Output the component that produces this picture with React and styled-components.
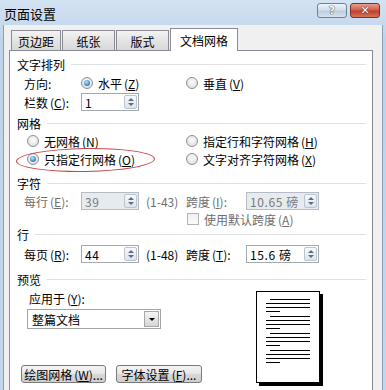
import React from "react";
import styled, { createGlobalStyle } from "styled-components";

const GlobalStyle = createGlobalStyle`
  html, body {
    margin: 0;
    padding: 0;
  }
  body {
    font-family: "Noto Sans CJK SC", "Liberation Sans", sans-serif;
    font-size: 12px;
    color: #000;
    background: #fff;
  }
`;

const Window = styled.div`
  width: 386px;
  height: 390px;
  overflow: hidden;
  display: flex;
  flex-direction: column;
  background: linear-gradient(#d4e3f3, #bed3ea 40px, #c3d6ec);
`;

const TitleBar = styled.div`
  height: 25px;
  flex-shrink: 0;
  display: flex;
  justify-content: space-between;
  padding-left: 4px;
`;

const Title = styled.span`
  font-size: 13px;
  line-height: 25px;
  margin-top: 1px;
`;

const Caption = styled.div`
  display: flex;
  gap: 3px;
  margin: 3px 6px 0 0;
`;

const CaptionButton = styled.div`
  width: 30px;
  height: 15px;
  border-radius: 3px;
  box-sizing: border-box;
  display: flex;
  align-items: center;
  justify-content: center;
  font-family: "DejaVu Sans", sans-serif;
  font-weight: bold;
  font-size: 11px;
  color: #fff;
  border: 1px solid ${(p) => (p.$close ? "#7a3226" : "#6f8299")};
  background: ${(p) =>
    p.$close
      ? "linear-gradient(#e6a08f, #d1604c 45%, #bf3f2c 55%, #d5735a)"
      : "linear-gradient(#eef3f9, #d3dfec 45%, #bdcde0 55%, #d6e2ef)"};
  text-shadow: 0 0 1px #333, 0 0 1px #333;
`;

const Body = styled.div`
  flex: 1;
  display: flex;
  flex-direction: column;
  margin: 0 3px;
  border-left: 1px solid #8d9db2;
  border-right: 1px solid #8d9db2;
  background: #f0f0f0;
  padding: 3px 9px 0 5px;
`;

const Tabs = styled.div`
  display: flex;
  align-items: flex-end;
  height: 22px;
  margin-left: 2px;
  position: relative;
  z-index: 1;
`;

const Tab = styled.div`
  width: ${(p) => p.$w}px;
  margin-right: 1px;
  box-sizing: border-box;
  display: flex;
  align-items: center;
  justify-content: center;
  border: 1px solid #898c95;
  border-bottom: none;
  height: ${(p) => (p.$active ? 23 : 20)}px;
  margin-bottom: ${(p) => (p.$active ? -1 : 0)}px;
  padding-top: ${(p) => (p.$active ? 0 : 1)}px;
  background: ${(p) =>
    p.$active ? "#fff" : "linear-gradient(#f3f3f3, #e4e4e4 50%, #d9d9d9)"};
`;

const Panel = styled.div`
  flex: 1;
  background: #fff;
  border: 1px solid #898c95;
  border-bottom: none;
  padding: 5px 0 0 7px;
  display: flex;
  flex-direction: column;
`;

const Section = styled.div`
  display: flex;
  align-items: center;
  gap: 6px;
  height: 16px;
  margin-top: ${(p) => p.$mt || 0}px;
  margin-right: 6px;

  &::after {
    content: "";
    flex: 1;
    height: 1px;
    background: #dde1e5;
  }
`;

const Row = styled.div`
  display: flex;
  align-items: center;
  position: relative;
  height: ${(p) => p.$h || 18}px;
  margin-top: ${(p) => p.$mt || 0}px;
  padding-left: ${(p) => p.$pl || 0}px;
`;

const Cell = styled.div`
  display: flex;
  align-items: center;
  flex-shrink: 0;
  width: ${(p) => (p.$w ? `${p.$w}px` : "auto")};
  margin-left: ${(p) => p.$ml || 0}px;
  color: ${(p) => (p.$muted ? "#6d6d6d" : "#000")};
  white-space: nowrap;
`;

const Paren = styled.span`
  margin-left: 2px;
`;

const Key = styled.span`
  text-decoration: underline;
`;

const RadioDot = styled.span`
  width: 12px;
  height: 12px;
  box-sizing: border-box;
  border-radius: 50%;
  border: 1px solid #8e8f8f;
  background: radial-gradient(circle at 50% 40%, #fdfdfd, #d8d8d8);
  margin-right: 5px;
  display: flex;
  align-items: center;
  justify-content: center;

  &::after {
    content: "";
    display: ${(p) => (p.$on ? "block" : "none")};
    width: 6px;
    height: 6px;
    border-radius: 50%;
    background: radial-gradient(circle at 40% 35%, #b9e6ff, #2b7fc0 70%, #1a4f86);
  }
`;

const CheckBox = styled.span`
  width: 12px;
  height: 12px;
  box-sizing: border-box;
  border: 1px solid #b4b4b4;
  background: linear-gradient(#f0f0f0, #fafafa);
  margin-right: 5px;
`;

const SpinBox = styled.div`
  width: ${(p) => p.$w}px;
  height: 18px;
  box-sizing: border-box;
  display: flex;
  align-items: center;
  padding: 0 1px 0 3px;
  border: 1px solid ${(p) => (p.$disabled ? "#b5bcc6" : "#a3a9b1")};
  background: ${(p) => (p.$disabled ? "#e6ebf0" : "#fff")};
  color: ${(p) => (p.$disabled ? "#7a7a7a" : "#000")};
`;

const SpinValue = styled.span`
  flex: 1;
  letter-spacing: 0.6px;
  white-space: pre;
`;

const SpinButtons = styled.div`
  width: 13px;
  height: 14px;
  box-sizing: border-box;
  border: 1px solid #bcc4ce;
  border-radius: 2px;
  background: linear-gradient(#f7f9fb, #dde4eb);
  display: flex;
  flex-direction: column;
  align-items: center;
  justify-content: center;
  gap: 2px;
`;

const Arrow = styled.span`
  width: 0;
  height: 0;
  border-left: 3px solid transparent;
  border-right: 3px solid transparent;
  ${(p) =>
    p.$down
      ? "border-top: 3px solid #5d6d82;"
      : "border-bottom: 3px solid #5d6d82;"}
`;

const Highlight = styled.span`
  position: absolute;
  left: -1px;
  top: -2px;
  width: 139px;
  height: 24px;
  box-sizing: border-box;
  border: 1.5px solid #c4464c;
  border-radius: 50%;
  transform: rotate(-1deg);
  pointer-events: none;
`;

const Bottom = styled.div`
  display: flex;
`;

const ApplyColumn = styled.div`
  width: 239px;
  display: flex;
  flex-direction: column;
`;

const Select = styled.div`
  width: 134px;
  height: 20px;
  box-sizing: border-box;
  margin: 3px 0 0 10px;
  border: 1px solid #a5a5a5;
  background: #fff;
  display: flex;
  align-items: center;
  padding: 0 1px 0 4px;
`;

const SelectText = styled.span`
  flex: 1;
`;

const DropButton = styled.span`
  width: 15px;
  height: 16px;
  box-sizing: border-box;
  border: 1px solid #a9a9a9;
  background: linear-gradient(#f4f4f4, #d6d6d6);
  display: flex;
  align-items: center;
  justify-content: center;

  &::after {
    content: "";
    border-left: 3px solid transparent;
    border-right: 3px solid transparent;
    border-top: 3px solid #000;
  }
`;

const Buttons = styled.div`
  display: flex;
  gap: 10px;
  margin: 36px 0 0 4px;
`;

const Button = styled.div`
  width: ${(p) => p.$w}px;
  height: 18px;
  box-sizing: border-box;
  border: 1px solid #7a7a7a;
  border-radius: 3px;
  background: linear-gradient(#f4f4f4, #e6e6e6 50%, #d7d7d7 51%, #cfcfcf);
  display: flex;
  align-items: center;
  justify-content: center;
  white-space: nowrap;
`;

const PreviewColumn = styled.div`
  padding-top: 4px;
`;

const Page = styled.div`
  width: 64px;
  height: 92px;
  box-sizing: border-box;
  border: 1px solid #000;
  background: #fff;
  box-shadow: 3px 3px 0 #000;
  padding: 7px 0 0 9px;
  display: flex;
  flex-direction: column;
  gap: 4px;
`;

const LineGroup = styled.div`
  display: flex;
  flex-direction: column;
  gap: 3px;
`;

const PageLine = styled.span`
  height: 1px;
  background: #000;
  width: ${(p) => p.$w}px;
  margin-left: ${(p) => p.$ml || 0}px;
`;

const Radio = ({ on, children }) => (
  <>
    <RadioDot $on={on} />
    {children}
  </>
);

const Spin = ({ w, value, disabled }) => (
  <SpinBox $w={w} $disabled={disabled}>
    <SpinValue>{value}</SpinValue>
    <SpinButtons>
      <Arrow />
      <Arrow $down />
    </SpinButtons>
  </SpinBox>
);

const acc = (text, key, tail = "") => (
  <>
    {text}
    <Paren>
      (<Key>{key}</Key>)
    </Paren>
    {tail}
  </>
);

const tabs = [
  { label: "页边距", w: 50 },
  { label: "纸张", w: 53 },
  { label: "版式", w: 53 },
  { label: "文档网格", w: 68, active: true },
];

export default function App() {
  return (
    <>
      <GlobalStyle />
      <Window>
        <TitleBar>
          <Title>页面设置</Title>
          <Caption>
            <CaptionButton>?</CaptionButton>
            <CaptionButton $close>✕</CaptionButton>
          </Caption>
        </TitleBar>
        <Body>
          <Tabs>
            {tabs.map((t) => (
              <Tab key={t.label} $w={t.w} $active={t.active}>
                {t.label}
              </Tab>
            ))}
          </Tabs>
          <Panel>
            <Section>文字排列</Section>
            <Row $mt={2} $pl={7}>
              <Cell $w={57}>方向:</Cell>
              <Cell $w={105}>
                <Radio on>{acc("水平", "Z")}</Radio>
              </Cell>
              <Cell>
                <Radio>{acc("垂直", "V")}</Radio>
              </Cell>
            </Row>
            <Row $h={20} $pl={7}>
              <Cell $w={57}>{acc("栏数", "C", ":")}</Cell>
              <Spin w={58} value="1" />
            </Row>

            <Section $mt={3}>网格</Section>
            <Row $mt={1} $pl={10}>
              <Cell $w={159}>
                <Radio>{acc("无网格", "N")}</Radio>
              </Cell>
              <Cell>
                <Radio>{acc("指定行和字符网格", "H")}</Radio>
              </Cell>
            </Row>
            <Row $pl={10}>
              <Highlight />
              <Cell $w={159}>
                <Radio on>{acc("只指定行网格", "O")}</Radio>
              </Cell>
              <Cell>
                <Radio>{acc("文字对齐字符网格", "X")}</Radio>
              </Cell>
            </Row>

            <Section $mt={7}>字符</Section>
            <Row $h={20} $pl={7}>
              <Cell $w={57} $muted>
                {acc("每行", "E", ":")}
              </Cell>
              <Spin w={58} value="39" disabled />
              <Cell $w={40} $ml={7} $muted>
                (1-43)
              </Cell>
              <Cell $w={60} $muted>
                {acc("跨度", "I", ":")}
              </Cell>
              <Spin w={73} value="10.65 磅" disabled />
            </Row>
            <Row $h={14} $mt={1} $pl={170}>
              <CheckBox />
              <Cell $muted>{acc("使用默认跨度", "A")}</Cell>
            </Row>

            <Section>行</Section>
            <Row $h={20} $mt={2} $pl={7}>
              <Cell $w={57}>{acc("每页", "R", ":")}</Cell>
              <Spin w={58} value="44" />
              <Cell $w={40} $ml={7}>
                (1-48)
              </Cell>
              <Cell $w={60}>{acc("跨度", "T", ":")}</Cell>
              <Spin w={73} value="15.6 磅" />
            </Row>

            <Section $mt={7}>预览</Section>
            <Bottom>
              <ApplyColumn>
                <Row $h={16} $mt={3} $pl={12}>
                  {acc("应用于", "Y", ":")}
                </Row>
                <Select>
                  <SelectText>整篇文档</SelectText>
                  <DropButton />
                </Select>
                <Buttons>
                  <Button $w={85}>{acc("绘图网格", "W", "...")}</Button>
                  <Button $w={86}>{acc("字体设置", "F", "...")}</Button>
                </Buttons>
              </ApplyColumn>
              <PreviewColumn>
                <Page>
                  {[0, 1, 2, 3].map((g) => (
                    <LineGroup key={g}>
                      <PageLine $w={40} $ml={4} />
                      <PageLine $w={44} />
                      <PageLine $w={44} />
                      <PageLine $w={14} />
                    </LineGroup>
                  ))}
                </Page>
              </PreviewColumn>
            </Bottom>
          </Panel>
        </Body>
      </Window>
    </>
  );
}
